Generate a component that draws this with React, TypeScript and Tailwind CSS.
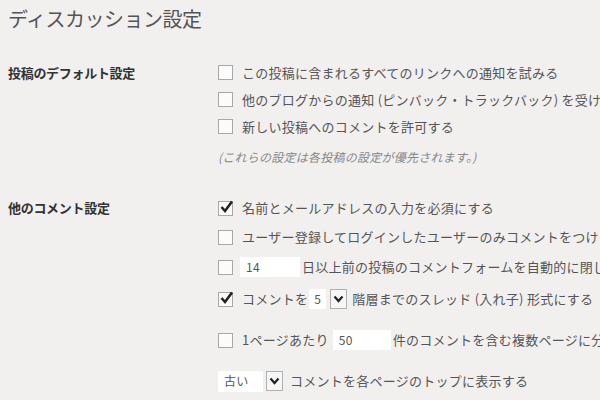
import React from 'react';

const font = { fontFamily: '"Noto Sans CJK JP", "Noto Sans", sans-serif' };

const Checkbox: React.FC<{ checked?: boolean }> = ({ checked }) => (
  <span className="relative inline-block w-[15px] h-[15px] border border-[#a8a8a8] bg-[#fbfbfb] shrink-0">
    {checked && (
      <svg className="absolute left-[0px] top-[-3px]" width="16" height="16" viewBox="0 0 16 16">
        <path d="M2.5 8 L6 12 L13 2.5" fill="none" stroke="#222" strokeWidth="2.6" />
      </svg>
    )}
  </span>
);

const ArrowBox: React.FC = () => (
  <span className="inline-flex items-center justify-center w-[17px] h-[20px] border border-[#b0b0b0] bg-[#f6f6f6]">
    <svg width="11" height="8" viewBox="0 0 11 8">
      <path d="M1.5 1.5 L5.5 6 L9.5 1.5" fill="none" stroke="#222" strokeWidth="2.2" />
    </svg>
  </span>
);

const Row: React.FC<{ h: string; children: React.ReactNode }> = ({ h, children }) => (
  <div className={`flex items-center whitespace-nowrap ${h}`}>{children}</div>
);

const App: React.FC = () => {
  return (
    <div className="w-[600px] h-[400px] overflow-hidden bg-[#f1f0ef] text-[#555]" style={font}>
      <h1 className="pl-[8px] pt-[5px] h-[59px] text-[20px] leading-[28px] text-[#555] tracking-[-0.5px]">
        ディスカッション設定
      </h1>

      <div className="flex">
        <div className="w-[210px] shrink-0 ml-[8px] h-[27px] flex items-center text-[13px] font-bold text-[#333] tracking-[-0.3px]">
          投稿のデフォルト設定
        </div>
        <div className="flex flex-col text-[13px] tracking-[0.25px]">
          <Row h="h-[27px]">
            <Checkbox />
            <span className="ml-[9px]">この投稿に含まれるすべてのリンクへの通知を試みる</span>
          </Row>
          <Row h="h-[27px]">
            <Checkbox />
            <span className="ml-[9px]">他のブログからの通知 (ピンバック・トラックバック) を受け付ける</span>
          </Row>
          <Row h="h-[27px]">
            <Checkbox />
            <span className="ml-[9px]">新しい投稿へのコメントを許可する</span>
          </Row>
          <Row h="h-[34px]">
            <span className="text-[12px] text-[#888] italic">(これらの設定は各投稿の設定が優先されます。)</span>
          </Row>
        </div>
      </div>

      <div className="flex mt-[20px]">
        <div className="w-[210px] shrink-0 ml-[8px] h-[28px] flex items-center text-[13px] font-bold text-[#333] tracking-[-0.3px]">
          他のコメント設定
        </div>
        <div className="flex flex-col text-[13px] tracking-[0.25px]">
          <Row h="h-[28px]">
            <Checkbox checked />
            <span className="ml-[9px]">名前とメールアドレスの入力を必須にする</span>
          </Row>
          <Row h="h-[30px]">
            <Checkbox />
            <span className="ml-[9px]">ユーザー登録してログインしたユーザーのみコメントをつけられるようにする</span>
          </Row>
          <Row h="h-[30px]">
            <Checkbox />
            <span className="ml-[7px] w-[60px] h-[20px] bg-white pl-[6px] flex items-center text-[12px] shrink-0">14</span>
            <span className="ml-[2px]">日以上前の投稿のコメントフォームを自動的に閉じる</span>
          </Row>
          <Row h="h-[34px]">
            <Checkbox checked />
            <span className="ml-[9px]">コメントを</span>
            <span className="ml-[1px] w-[17px] h-[20px] bg-white flex items-center justify-center text-[12px] shrink-0">5</span>
            <span className="ml-[4px] flex shrink-0"><ArrowBox /></span>
            <span className="ml-[5px]">階層までのスレッド (入れ子) 形式にする</span>
          </Row>
          <Row h="h-[48px]">
            <Checkbox />
            <span className="ml-[9px]">1ページあたり</span>
            <span className="ml-[4px] w-[58px] h-[20px] bg-white pl-[6px] flex items-center text-[12px] shrink-0">50</span>
            <span className="ml-[2px]">件のコメントを含む複数ページに分割する</span>
          </Row>
          <Row h="h-[34px]">
            <span className="w-[45px] h-[21px] bg-white pl-[6px] flex items-center text-[12px] shrink-0">古い</span>
            <span className="ml-[3px] flex shrink-0"><ArrowBox /></span>
            <span className="ml-[7px]">コメントを各ページのトップに表示する</span>
          </Row>
        </div>
      </div>
    </div>
  );
};

export default App;
